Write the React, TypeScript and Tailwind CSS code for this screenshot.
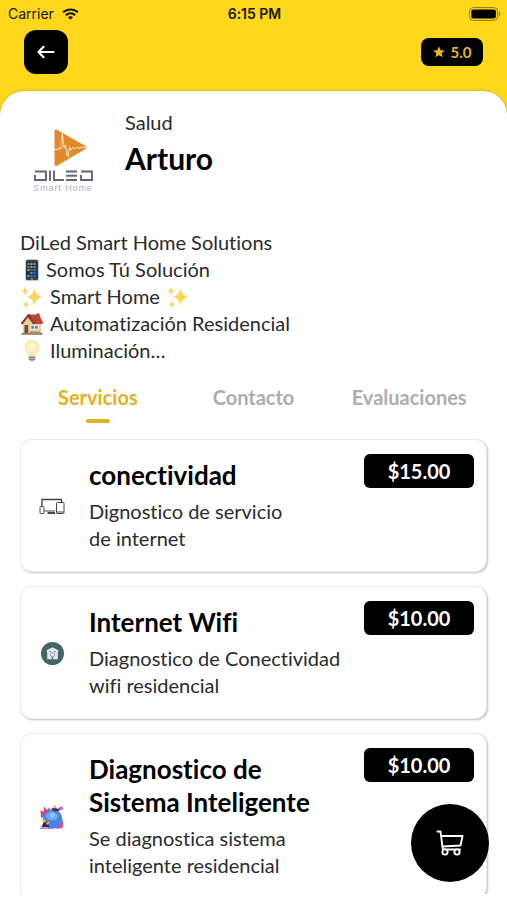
import React from 'react';
import type { ReactNode } from 'react';

type Service = {
    id: string;
    title: string;
    description: string;
    price: string;
    icon: ReactNode;
};

// Status bar glyphs
const WifiIcon = () => (
    <svg viewBox="0 0 18 13" className="h-3 w-[17px]" fill="none" stroke="#151500" strokeWidth="2.3" aria-hidden="true">
        <path d="M1 4.7C5.500.6 12.500.6 17 4.700" />
        <path d="M3.900 7.800C6.900 5.100 11.100 5.100 14.100 7.800" />
        <path d="M6.300 9.900C8 8.600 10 8.600 11.700 9.900L9 12.800Z" fill="#151500" stroke="none" />
    </svg>
);

const BatteryIcon = () => (
    <svg viewBox="0 0 32 14" className="h-3.5 w-8" aria-hidden="true">
        <rect x="0.6" y="0.6" width="28" height="12.800" rx="3.800" fill="none" stroke="#8a7714" strokeWidth="1" />
        <rect x="2.300" y="2.400" width="24.600" height="9.200" rx="2" fill="#000" />
        <path d="M30 4.800c1.800.5 1.800 3.900 0 4.400z" fill="#8a7714" />
    </svg>
);

const ArrowLeftIcon = () => (
    <svg viewBox="0 0 18 14" className="h-3.5 w-[18px]" fill="none" stroke="#fff" strokeWidth="2.200" strokeLinecap="round" strokeLinejoin="round" aria-hidden="true">
        <path d="M16.500 7H1.500M6.500 1.800 1.500 7l5 5.200" />
    </svg>
);

const StarIcon = () => (
    <svg viewBox="0 0 24 24" className="h-3 w-3" fill="#e9b61f" aria-hidden="true">
        <path d="m12 .5 3.300 7.900 8.200.7-6.200 5.400 1.900 8.200L12 18.300l-7.200 4.400 1.900-8.200L.5 9.100l8.200-.7z" />
    </svg>
);

const CartIcon = () => (
    <svg viewBox="0 0 28 26" className="h-[26px] w-7" fill="none" stroke="#fff" strokeWidth="1.900" strokeLinecap="round" strokeLinejoin="round" aria-hidden="true">
        <path d="M1.500 1.500H4.500L6.800 19.500H24" />
        <path d="M5.200 6H26.500L24.500 15.500 6.400 16.500" />
        <circle cx="9" cy="22" r="2.600" fill="#000" />
        <circle cx="21" cy="22" r="2.600" fill="#000" />
    </svg>
);

// Business logo: play mark with a pulse line, block letters drawn below it
const DiledLogo = () => (
    <div className="flex w-[60px] flex-col items-center">
        <svg viewBox="0 0 60 54" className="h-[54px] w-[60px]" role="img" aria-label="DILED">
            <path d="M23.500.6 52.500 17Q54.500 18.500 52.500 20L24 36.700Q21.500 37.500 21.500 35V2Q21.500-.2 23.500.6Z" fill="#e2892a" />
            <path d="M21.500 20.500h3l1.500-2 1.500 2 1-3 .8-13L31 19l1.500-3 1.500 10 1 1.800L36.500 18l1.500 3 2-2.500 2 1.500 2-2 2 1.500 2-1.500 2 .8 3-.6" fill="none" stroke="#fff3dc" strokeWidth="1" />
            <g fill="none" stroke="#626678" strokeWidth="1.900">
                <path d="M2 42.500H13V51H2V46" />
                <path d="M17 41.600V52" />
                <path d="M21 41.600V51H31" />
                <path d="M33 42.500H44M33 46.800H44M33 51H44" />
                <path d="M48 42.500H59V51H48V46" />
            </g>
        </svg>
        <span className="mt-px whitespace-nowrap font-['Liberation_Sans'] text-[9px] leading-[9px] tracking-widest text-[#b3b3ba]">Smart Home</span>
    </div>
);

// Emoji drawings used in the description
const PhoneEmoji = () => (
    <svg viewBox="0 0 24 24" className="h-6 w-6" role="img" aria-label="Teléfono">
        <rect x="5" y="1" width="14" height="22" rx="2.500" fill="#c5c9cb" />
        <rect x="6" y="2" width="12" height="20" rx="1.500" fill="#39424a" />
        <rect x="6.500" y="4" width="11" height="15.500" fill="#1f3550" />
        <g>
            <path d="M7.500 5h2v2h-2zM13.500 8h2v2h-2zM10.500 14h2v2h-2z" fill="#4d9de0" />
            <path d="M10.500 5h2v2h-2zM7.500 11h2v2h-2z" fill="#d7a13d" />
            <path d="M13.500 5h2v2h-2zM10.500 8h2v2h-2zM7.500 17h2v2h-2z" fill="#65b96a" />
            <path d="M7.500 8h2v2h-2zM13.500 11h2v2h-2z" fill="#d35b52" />
            <path d="M10.500 11h2v2h-2zM13.500 14h2v2h-2zM10.500 17h2v2h-2zM13.500 17h2v2h-2z" fill="#3671b5" />
        </g>
        <circle cx="12" cy="20.800" r="0.900" fill="#aab0b4" />
    </svg>
);

const SparklesEmoji = () => (
    <svg viewBox="0 0 24 24" className="h-6 w-6" role="img" aria-label="Destellos" fill="#fdd55a">
        <path d="M14.500 3q1 7 7.500 9-6.500 1.500-7.500 9-1-7.500-7.500-9 6.500-2 7.500-9z" />
        <path d="M5 2q.5 3.200 3.500 4Q5.500 6.800 5 10 4.500 6.800 1.500 6 4.500 5.200 5 2z" />
        <path d="M6 16q.5 2.800 3 3.500Q6.500 20.200 6 23q-.5-2.800-3-3.500Q5.500 18.800 6 16z" />
    </svg>
);

const HouseEmoji = () => (
    <svg viewBox="0 0 24 24" className="h-6 w-6" role="img" aria-label="Casa">
        <path d="M16.500 1.500h3V8h-3z" fill="#8d4439" />
        <path d="M3 10.500 8.500 4 21 10v11H3z" fill="#e9cfa0" />
        <path d="M9 2.500H19L23.500 11.500 21 12H13z" fill="#b9473c" />
        <path d="M.5 11.500 8 2l2 .5 5 9-1.500 1L8 5.500 2.500 12.500z" fill="#8f3831" />
        <path d="M4.500 13h3.700v8.500H4.500z" fill="#7c4a2c" />
        <path d="M10.500 13h8v4.500h-8z" fill="#fff" />
        <path d="M11.300 13.700h2.800v3h-2.800zM15 13.700h2.800v3H15z" fill="#4a86b8" />
        <path d="M1.500 21H22.500v1.800H1.500z" fill="#8a7b66" />
        <path d="M10 19.500h10.500V22H10z" fill="#a98a63" />
    </svg>
);

const BulbEmoji = () => (
    <svg viewBox="0 0 24 24" className="h-6 w-6" role="img" aria-label="Bombilla">
        <path d="M12 1c4.500 0 7.500 3.100 7.500 7.200 0 3.800-3.500 5.300-4 9.300h-7c-.5-4-4-5.500-4-9.300C4.500 4.100 7.500 1 12 1z" fill="#fdebae" />
        <path d="M12 4c2.800 0 4.500 1.800 4.500 4.300 0 2.400-2 3.700-2.500 6.700h-4c-.5-3-2.500-4.300-2.500-6.700C7.500 5.800 9.200 4 12 4z" fill="#fff6d4" />
        <path d="M10.500 10l.8 6M13.500 10l-.8 6" stroke="#eed491" strokeWidth="0.700" fill="none" />
        <path d="M8.800 17h6.400v3.500l-1.700 2h-3l-1.700-2z" fill="#b2b2ad" />
        <path d="M8.800 18.500h6.400M9 20.500h6" stroke="#777" strokeWidth="0.700" />
    </svg>
);

// Service pictures
const DevicesPicture = () => (
    <svg viewBox="0 0 26 17" className="h-[17px] w-[26px]" fill="none" stroke="#444" strokeWidth="1" aria-hidden="true">
        <path d="M3 8V1.500H22.500V4" strokeWidth="1.400" />
        <path d="M5.500 13H16" />
        <path d="M8.500 15H16" strokeWidth="2" />
        <rect x="1" y="8.500" width="4" height="7" rx="0.800" />
        <rect x="17.500" y="4.500" width="7.500" height="11" rx="0.800" />
        <path d="M17.500 14h7.500" />
    </svg>
);

const SmartHousePicture = () => (
    <svg viewBox="0 0 24 24" className="h-[23px] w-[23px]" aria-hidden="true">
        <circle cx="12" cy="12" r="12" fill="#456569" />
        <path d="M12 5.500 18 8.500v2h-.500v7.500h-11v-7.500H6v-2z" fill="#e4ebf0" />
        <path d="M8.500 10h2M13.500 10h2" stroke="#59747d" strokeWidth="0.800" />
        <circle cx="12" cy="13.200" r="2.200" fill="none" stroke="#7f959c" strokeWidth="0.900" />
        <path d="M11.200 18v-2h1.600v2z" fill="#456569" />
    </svg>
);

const GlobePicture = () => (
    <svg viewBox="0 0 26 26" className="h-[26px] w-[26px]" aria-hidden="true">
        <path d="M2 14 1.500 6l3 2L5 2.500l3 3.500 2.500-3L11 9z" fill="#d9407e" />
        <path d="M18 17l5-2 1.500 4-1 5-6 1z" fill="#e24b93" />
        <circle cx="13.500" cy="15" r="9.800" fill="#4584e2" />
        <ellipse cx="13" cy="12" rx="6" ry="4.500" fill="#6aa8f2" />
        <path d="M11 10c2-1.500 4-1 5 .5l-1.500 3-2 .5-1.500-2z" fill="#95c8f8" />
        <path d="M12 5l4-2 2.500 2 3-1.500L20 7l-4 .5z" fill="#4a3350" />
        <circle cx="16" cy="3" r="1.400" fill="#f2b05c" />
        <path d="M20 3.500l3.500-1.500.5 3.500-3 1z" fill="#b06be0" />
        <path d="M2.500 23l2.500-5.500 3 1 2.500 4.500z" fill="#3a2548" />
        <circle cx="5" cy="17" r="1.700" fill="#efb047" />
        <path d="M7 19.500l3-2 1 1-3 2.500z" fill="#efb047" />
        <path d="M1 23.500h12v1.300H1z" fill="#a561d8" />
    </svg>
);

const tabs = ['Servicios', 'Contacto', 'Evaluaciones'];

const services: Service[] = [
    {
        id: 'conectividad',
        title: 'conectividad',
        description: 'Dignostico de servicio\nde internet',
        price: '$15.00',
        icon: <DevicesPicture />,
    },
    {
        id: 'wifi',
        title: 'Internet Wifi',
        description: 'Diagnostico de Conectividad\nwifi residencial',
        price: '$10.00',
        icon: <SmartHousePicture />,
    },
    {
        id: 'inteligente',
        title: 'Diagnostico de\nSistema Inteligente',
        description: 'Se diagnostica sistema\ninteligente residencial',
        price: '$10.00',
        icon: <GlobePicture />,
    },
];

const StatusBar = () => (
    <div className="grid h-7 grid-cols-3 items-center pl-2 pr-1.5 font-[Inter] text-sm text-[#151500]">
        <div className="flex items-center gap-2">
            <span>Carrier</span>
            <WifiIcon />
        </div>
        <span className="text-center font-semibold">6:15 PM</span>
        <div className="flex justify-end">
            <BatteryIcon />
        </div>
    </div>
);

const ServiceCard = ({ service }: { service: Service }) => (
    <li className="flex shrink-0 rounded-xl border border-[#ececec] bg-white pb-[19px] pl-[18px] pr-3 shadow-[1px_1px_2px_rgba(0,0,0,0.25)]">
        <div className="flex w-[26px] shrink-0 items-center justify-center pt-5">{service.icon}</div>
        <div className="min-w-0 flex-1 pl-6 pt-[19px]">
            <h2 className="whitespace-pre text-[26px] font-bold leading-[33px] text-black">{service.title}</h2>
            <p className="mt-1.5 whitespace-pre text-xl leading-[27px] text-[#2b2b2b]">{service.description}</p>
        </div>
        <span className="mt-3.5 h-[34px] w-[110px] shrink-0 rounded-md bg-black text-center text-xl font-bold leading-[34px] text-white">
            {service.price}
        </span>
    </li>
);

export default function App() {
    const [activeTab, setActiveTab] = React.useState('Servicios');

    return (
        <div className="flex h-screen w-full flex-col overflow-hidden bg-[#ffd81b] font-[Lato,sans-serif] [font-variant-ligatures:none]">
            <StatusBar />
            <header className="flex items-center justify-between px-6 pb-[17px] pt-0.5">
                <button type="button" aria-label="Regresar" className="flex h-11 w-11 items-center justify-center rounded-xl bg-black">
                    <ArrowLeftIcon />
                </button>
                <span className="flex h-7 w-[62px] items-center justify-center gap-1.5 rounded-lg bg-black text-[15px] font-bold text-[#e9b61f]">
                    <StarIcon />
                    5.0
                </span>
            </header>

            <main className="flex min-h-0 flex-1 flex-col rounded-t-3xl bg-white pb-1.5 shadow-[0_0_2px_rgba(0,0,0,0.4)]">
                <section className="flex gap-8 pl-[33px] pt-[18px]">
                    <div className="pt-5">
                        <DiledLogo />
                    </div>
                    <div>
                        <p className="text-xl leading-[27px] text-[#2b2b2b]">Salud</p>
                        <h1 className="mt-1 text-3xl font-bold leading-9 text-black">Arturo</h1>
                    </div>
                </section>

                <section className="px-5 pt-9 text-xl leading-[27px] text-[#2b2b2b]">
                    <p>DiLed Smart Home Solutions</p>
                    <p className="flex items-center gap-0.5">
                        <PhoneEmoji />
                        Somos Tú Solución
                    </p>
                    <p className="flex items-center gap-1.5">
                        <SparklesEmoji />
                        Smart Home
                        <SparklesEmoji />
                    </p>
                    <p className="flex items-center gap-1.5">
                        <HouseEmoji />
                        Automatización Residencial
                    </p>
                    <p className="flex items-center gap-1.5">
                        <BulbEmoji />
                        Iluminación…
                    </p>
                </section>

                <nav className="mt-5 grid grid-cols-3 px-5" aria-label="Secciones">
                    {tabs.map((tab) => (
                        <button
                            key={tab}
                            type="button"
                            onClick={() => setActiveTab(tab)}
                            className={`flex flex-col items-center gap-2 text-xl font-bold leading-[27px] ${
                                activeTab === tab ? 'text-[#e3b11e]' : 'text-[#adadad]'
                            }`}
                        >
                            {tab}
                            <span className={`h-1 w-6 rounded-sm ${activeTab === tab ? 'bg-[#e3b11e]' : ''}`} />
                        </button>
                    ))}
                </nav>

                <ul className="mt-3.5 flex min-h-0 flex-1 flex-col gap-3.5 overflow-hidden px-5 pt-0.5">
                    {services.map((service) => (
                        <ServiceCard key={service.id} service={service} />
                    ))}
                </ul>
            </main>

            <button
                type="button"
                aria-label="Carrito"
                className="fixed bottom-[18px] right-[18px] flex h-[78px] w-[78px] items-center justify-center rounded-full bg-black"
            >
                <CartIcon />
            </button>
        </div>
    );
}
